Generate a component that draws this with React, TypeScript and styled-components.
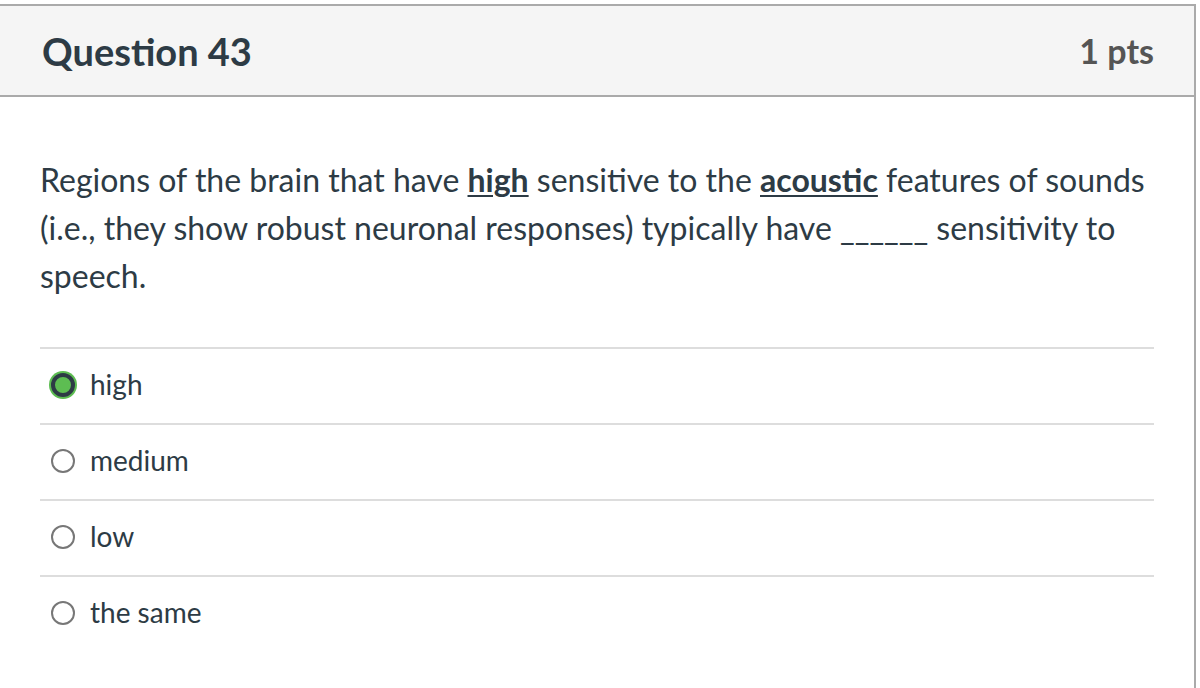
import React from 'react';
import styled, { createGlobalStyle } from 'styled-components';

const GlobalStyle = createGlobalStyle`
  html, body {
    margin: 0;
    padding: 0;
    background: #ffffff;
    font-family: Lato, "Noto Sans", "Liberation Sans", sans-serif;
    color: #2d3b45;
    overflow: hidden;
  }
`;

const Card = styled.div`
  margin: 4px 4px 0 -2px;
  border: 2px solid #aaaaaa;
  border-bottom: none;
  height: 700px;
  background: #ffffff;
`;

const Header = styled.div`
  display: flex;
  align-items: center;
  justify-content: space-between;
  height: 89px;
  padding: 0 40px 0 42px;
  background: #f5f5f5;
  border-bottom: 2px solid #aaaaaa;
`;

const Title = styled.h2`
  margin: 0;
  font-size: 38px;
  font-weight: 700;
  color: #2d3b45;
`;

const Points = styled.div`
  font-size: 34px;
  font-weight: 700;
  color: #555555;
`;

const Body = styled.div`
  padding: 0 40px 0 40px;
`;

const QuestionText = styled.p`
  margin: 59px 0 47px;
  font-size: 32px;
  line-height: 48px;
  color: #2d3b45;
`;

const Emph = styled.span`
  font-weight: 700;
  text-decoration: underline;
  text-decoration-thickness: 2px;
  text-underline-offset: 3px;
`;

const AnswerList = styled.div`
  display: flex;
  flex-direction: column;
`;

const AnswerRow = styled.label`
  display: flex;
  align-items: center;
  gap: 15px;
  height: 70px;
  padding-bottom: 4px;
  border-top: 2px solid #dddddd;
  padding-left: 11px;
  font-size: 28px;
  color: #2d3b45;
`;

const Radio = styled.span<{ $checked: boolean }>`
  box-sizing: border-box;
  width: 24px;
  height: 24px;
  border-radius: 50%;
  flex-shrink: 0;
  margin-top: 2px;
  ${p =>
    p.$checked
      ? `
    background: #5dbd52;
    border: 4px solid #2d3b45;
    box-shadow: 0 0 0 2px #5dbd52;
  `
      : `
    background: #ffffff;
    border: 2px solid #777777;
  `}
`;

const answers = ['high', 'medium', 'low', 'the same'];

export default function App() {
  return (
    <>
      <GlobalStyle />
      <Card>
        <Header>
          <Title>Question 43</Title>
          <Points>1 pts</Points>
        </Header>
        <Body>
          <QuestionText>
            Regions of the brain that have <Emph>high</Emph> sensitive to the{' '}
            <Emph>acoustic</Emph> features of sounds (i.e., they show robust neuronal
            responses) typically have ______ sensitivity to speech.
          </QuestionText>
          <AnswerList>
            {answers.map((a, i) => (
              <AnswerRow key={a}>
                <Radio $checked={i === 0} />
                {a}
              </AnswerRow>
            ))}
          </AnswerList>
        </Body>
      </Card>
    </>
  );
}
